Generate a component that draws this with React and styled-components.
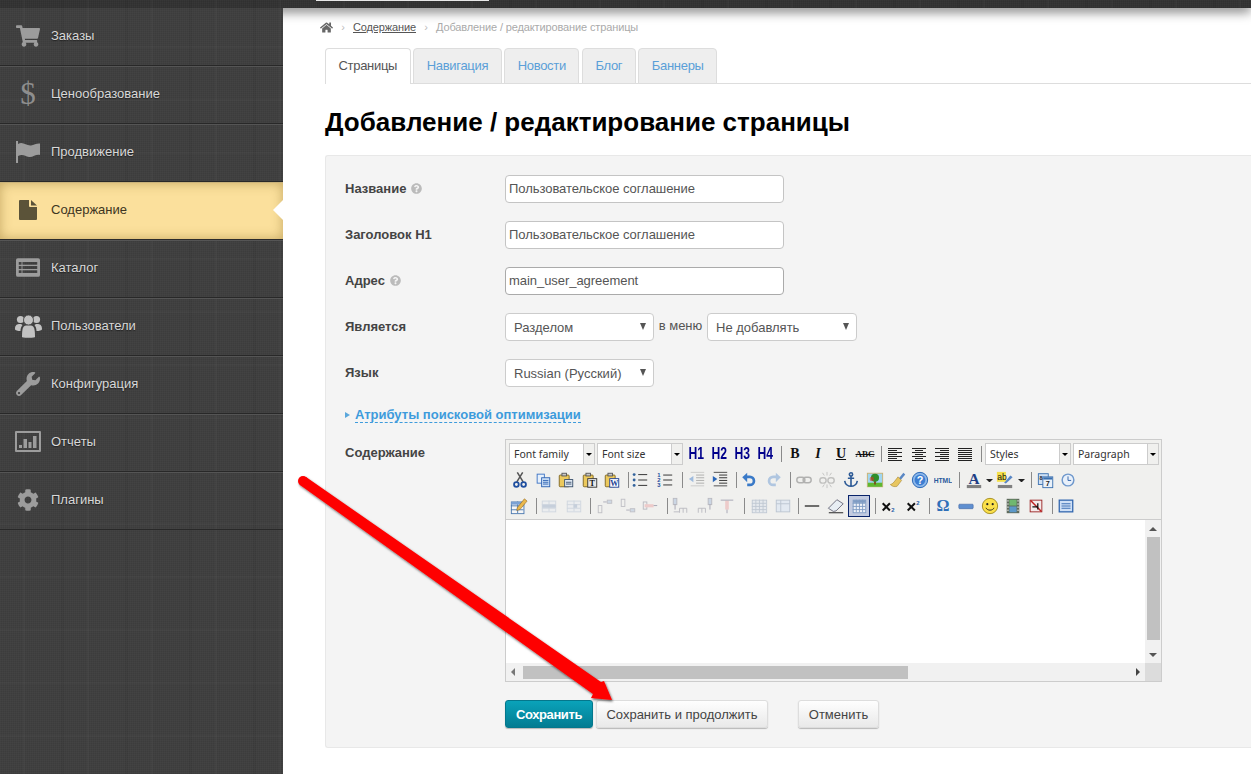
import React from "react";
import styled, { createGlobalStyle, css } from "styled-components";
import { FaShoppingCart, FaWrench, FaCog, FaHome, FaQuestionCircle } from "react-icons/fa";

const GlobalStyle = createGlobalStyle`
  html, body {
    margin: 0;
    height: 100%;
    overflow: hidden;
    background: #fff;
  }
  body {
    font-family: "Liberation Sans", Arial, sans-serif;
    font-size: 13px;
    color: #444;
  }
`;

const darkCloth = css`
  background-color: #404040;
  background-image:
    repeating-linear-gradient(90deg, rgba(255, 255, 255, 0.018) 0 1px, transparent 1px 2px),
    repeating-linear-gradient(0deg, rgba(0, 0, 0, 0.06) 0 1px, transparent 1px 2px),
    repeating-linear-gradient(90deg, transparent 0 23px, rgba(255, 255, 255, 0.02) 23px 25px, transparent 25px 61px, rgba(0, 0, 0, 0.04) 61px 64px),
    repeating-linear-gradient(0deg, transparent 0 37px, rgba(255, 255, 255, 0.015) 37px 39px, transparent 39px 53px);
`;

const Page = styled.div`
  position: relative;
  width: 1251px;
  height: 774px;
  display: flex;
  flex-direction: column;
  overflow: hidden;
`;

const TopBar = styled.div`
  ${darkCloth}
  height: 8px;
  flex: none;
  background-color: #333;
  box-shadow: 0 3px 12px rgba(0, 0, 0, 0.65);
  position: relative;
  z-index: 2;
`;

const TopSearch = styled.div`
  margin-left: 316px;
  width: 173px;
  height: 1px;
  background: #e8e8e8;
`;

const Body = styled.div`
  flex: 1;
  display: flex;
  min-height: 0;
`;

const Sidebar = styled.nav`
  ${darkCloth}
  width: 283px;
  flex: none;
  position: relative;
  z-index: 3;
`;

const NavItem = styled.a`
  position: relative;
  box-sizing: border-box;
  height: 58px;
  display: flex;
  align-items: center;
  padding-bottom: 3px;
  color: ${(p) => (p.$active ? "#3d3522" : "#d8d8d8")};
  text-shadow: ${(p) => (p.$active ? "none" : "0 1px 1px #222")};
  border-bottom: 1px solid ${(p) => (p.$active ? "#2b2b2b" : "#282828")};
  border-top: 1px solid ${(p) => (p.$active ? "#c9b27a" : p.$first ? "transparent" : "#555")};
  background: ${(p) => (p.$active ? "#fbe09c" : "transparent")};
  box-shadow: ${(p) => (p.$active ? "inset 0 0 12px rgba(130, 100, 30, 0.45)" : "none")};

  ${(p) =>
    p.$active &&
    css`
      &::after {
        content: "";
        position: absolute;
        right: 0;
        top: 17px;
        border: 10px solid transparent;
        border-left-width: 0;
        border-right-color: #fff;
      }
    `}
`;

const NavIcon = styled.span`
  box-sizing: border-box;
  width: 51px;
  padding-left: 5px;
  display: flex;
  justify-content: center;
  color: ${(p) => (p.$active ? "#5b5339" : "#9c9c9c")};
  text-shadow: none;
`;

const DollarGlyph = styled.span`
  font-family: "Liberation Serif", serif;
  font-size: 31px;
  line-height: 31px;
  color: #8e8e8e;
`;

const Main = styled.main`
  flex: 1;
  min-width: 0;
  padding-left: 42px;
`;

const Crumbs = styled.div`
  height: 40px;
  display: flex;
  align-items: center;
  margin-left: -5px;
  padding-bottom: 2px;
  box-sizing: border-box;
  font-size: 11px;
  letter-spacing: -0.13px;
  color: #aaa;
  svg {
    color: #666;
  }
`;

const CrumbLink = styled.a`
  color: #555;
  text-decoration: underline;
`;

const CrumbSep = styled.span`
  width: ${(p) => p.$w}px;
  text-align: center;
  color: #bbb;
`;

const Tabs = styled.div`
  display: flex;
  gap: 2.5px;
  height: 36px;
  box-sizing: border-box;
  border-bottom: 1px solid #ddd;
`;

const Tab = styled.a`
  box-sizing: border-box;
  height: 36px;
  padding: 9px 12.5px 0;
  letter-spacing: -0.3px;
  border: 1px solid #ddd;
  border-bottom: ${(p) => (p.$active ? "0" : "1px solid #ddd")};
  border-radius: 4px 4px 0 0;
  background: ${(p) => (p.$active ? "#fff" : "#eee")};
  color: ${(p) => (p.$active ? "#555" : "#5a9fd8")};
`;

const Title = styled.h1`
  margin: 0;
  height: 71px;
  line-height: 77px;
  font-size: 26px;
  font-weight: bold;
  color: #000;
  white-space: nowrap;
`;

const Panel = styled.form`
  box-sizing: border-box;
  height: 593px;
  padding: 19px 0 0 19px;
  background: #f4f4f4;
  border: 1px solid #e8e8e8;
  border-right: 0;
  border-radius: 3px 0 0 3px;
`;

const Row = styled.div`
  display: flex;
  align-items: ${(p) => (p.$top ? "flex-start" : "center")};
  min-height: 28px;
  margin-bottom: 18px;
`;

const Label = styled.label`
  width: 160px;
  flex: none;
  display: flex;
  align-items: center;
  gap: 5px;
  font-weight: bold;
  color: #444;
  padding: ${(p) => (p.$top ? "6px 0 0" : "0 0 2px")};
  svg {
    color: #bbb;
  }
`;

const TextInput = styled.input`
  box-sizing: border-box;
  width: 279px;
  height: 28px;
  padding: 0 3px 2px;
  font: 13px "Liberation Sans", Arial, sans-serif;
  letter-spacing: -0.05px;
  color: #555;
  background: #fff;
  border: 1px solid ${(p) => (p.$strong ? "#aaa" : "#c4c4c4")};
  border-radius: 4px;
  outline: none;
`;

const SelectBox = styled.div`
  box-sizing: border-box;
  width: ${(p) => p.$w}px;
  height: 28px;
  padding: 1px 8px 0;
  display: flex;
  align-items: center;
  justify-content: space-between;
  color: #555;
  background: #fff;
  border: 1px solid #ccc;
  border-radius: 4px;

  &::after {
    content: "";
    border: 3.5px solid transparent;
    border-top: 7px solid #555;
    border-bottom: 0;
    margin-right: -1px;
    margin-top: -2px;
  }
`;

const InMenu = styled.span`
  width: 53px;
  text-align: center;
  color: #555;
  margin-top: -3px;
`;

const SeoToggle = styled.div`
  display: flex;
  align-items: center;
  height: 19px;
  margin: 0 0 15px;
  &::before {
    content: "";
    border: 3.5px solid transparent;
    border-left: 5px solid #5aa7dc;
    border-right: 0;
    margin-right: 5px;
  }
`;

const SeoLink = styled.a`
  font-weight: bold;
  color: #3d9bdc;
  border-bottom: 1px dashed #3d9bdc;
  line-height: 15px;
`;

const Editor = styled.div`
  box-sizing: border-box;
  width: 657px;
  height: 243px;
  background: #f0f0ee;
  border: 1px solid #ccc;
  display: flex;
  flex-direction: column;
`;

const Toolbar = styled.div`
  height: 79px;
  flex: none;
  padding-top: 1px;
  box-sizing: border-box;
`;

const ToolRow = styled.div`
  height: 26px;
  display: flex;
  align-items: center;
`;

const Tool = styled.span`
  flex: none;
  box-sizing: border-box;
  width: ${(p) => p.$w}px;
  margin-left: ${(p) => p.$left}px;
  height: ${(p) => (p.$active ? "22px" : "20px")};
  display: flex;
  align-items: center;
  justify-content: center;
  ${(p) =>
    p.$active &&
    css`
      background: #c2cbe0;
      border: 1px solid #0a246a;
    `}
`;

const ToolSep = styled.span`
  flex: none;
  width: 1px;
  height: 16px;
  margin-left: ${(p) => p.$left}px;
  background: #8a8a8a;
`;

const Combo = styled.span`
  flex: none;
  box-sizing: border-box;
  width: 86px;
  height: 22px;
  margin-left: ${(p) => p.$left}px;
  display: flex;
  align-items: center;
  padding-left: 4px;
  background: #fff;
  border: 1px solid #ccc;
  font: 10.5px "Noto Sans", sans-serif;
  color: #333;
`;

const ComboArrow = styled.span`
  margin-left: auto;
  width: 10px;
  height: 20px;
  background: #f0f0ee;
  border-left: 1px solid #ccc;
  display: flex;
  align-items: center;
  justify-content: center;
  &::after {
    content: "";
    border: 3px solid transparent;
    border-top: 3px solid #000;
    border-bottom: 0;
  }
`;

const SplitArrow = styled.span`
  flex: none;
  box-sizing: border-box;
  width: 7px;
  margin-left: ${(p) => p.$left}px;
  border: 3.5px solid transparent;
  border-top: 3.5px solid #222;
  border-bottom: 0;
`;

const HeadingTool = styled.span`
  font: bold 16px "Liberation Sans", sans-serif;
  color: #00008b;
  transform: scaleX(0.76);
  white-space: nowrap;
`;

const LetterTool = styled.span`
  font: bold ${(p) => p.$size || 13}px "Liberation Serif", serif;
  font-style: ${(p) => (p.$italic ? "italic" : "normal")};
  text-decoration: ${(p) => p.$line || "none"};
  color: #111;
`;

const EditArea = styled.div`
  flex: 1;
  min-height: 0;
  display: flex;
  background: #fff;
  border-top: 1px solid #ccc;
`;

const EditBlank = styled.div`
  flex: 1;
`;

const VBar = styled.div`
  width: 16px;
  flex: none;
  background: #f1f1f1;
  display: flex;
  flex-direction: column;
  align-items: center;
`;

const VThumb = styled.div`
  width: 13px;
  height: 103px;
  margin-bottom: auto;
  background: #c1c1c1;
`;

const ScrollArrow = styled.span`
  border: 4px solid transparent;
  ${(p) => p.$dir === "up" && "border-bottom: 4px solid #555; border-top: 0;"}
  ${(p) => p.$dir === "down" && "border-top: 4px solid #555; border-bottom: 0; margin-bottom: 6px;"}
  ${(p) => p.$dir === "left" && "border-right: 4px solid #777; border-left: 0; margin-left: 5px;"}
  ${(p) => p.$dir === "right" && "border-left: 4px solid #444; border-right: 0; margin-right: 5px;"}
`;

const UpSlot = styled.div`
  height: 17px;
  display: flex;
  align-items: center;
`;

const HBar = styled.div`
  height: 18px;
  flex: none;
  background: #f1f1f1;
  display: flex;
  align-items: center;
`;

const HThumb = styled.div`
  width: 385px;
  height: 13px;
  margin: 0 auto 0 8px;
  background: #c1c1c1;
`;

const ScrollCorner = styled.div`
  width: 16px;
  height: 100%;
  background: #dcdcdc;
`;

const Actions = styled.div`
  display: flex;
  margin: 18px 0 0 160px;
`;

const Button = styled.button`
  box-sizing: border-box;
  width: ${(p) => p.$w}px;
  height: 28px;
  margin-left: ${(p) => p.$left || 0}px;
  padding: 0;
  font: 13px "Liberation Sans", Arial, sans-serif;
  letter-spacing: ${(p) => (p.$primary ? "-0.4px" : "0")};
  border-radius: 3px;
  color: ${(p) => (p.$primary ? "#fff" : "#444")};
  font-weight: ${(p) => (p.$primary ? "bold" : "normal")};
  background: ${(p) =>
    p.$primary ? "linear-gradient(#0aa3ba, #037c92)" : "linear-gradient(#fefefe, #e9e9e9)"};
  border: 1px solid ${(p) => (p.$primary ? "#04778c" : "#ddd")};
  box-shadow: 0 1px 1px rgba(0, 0, 0, 0.25);
`;

const ArrowLayer = styled.svg`
  position: absolute;
  left: 0;
  top: 0;
  z-index: 4;
  pointer-events: none;
`;

/* ----- drawn icons ----- */

const FlagIcon = () => (
  <svg width="26" height="22" viewBox="0 0 26 22" fill="currentColor">
    <rect x="1" y="0" width="2" height="22" />
    <path d="M3 3 C8 0 11 5 16 4.5 C19 4 22 2 25 2.5 V14 C21 13 18 16.5 14 16 C10 15.5 8 12.5 3 15 Z" />
  </svg>
);

const PageIcon = () => (
  <svg width="18" height="20" viewBox="0 0 18 20" fill="currentColor">
    <path d="M1 0 H10 V6 A1 1 0 0 0 11 7 H18 V19 A1 1 0 0 1 17 20 H1 A1 1 0 0 1 0 19 V1 A1 1 0 0 1 1 0 Z" />
    <path d="M12 0 L18 5.5 H12 Z" />
  </svg>
);

const CatalogIcon = () => (
  <svg width="24" height="19" viewBox="0 0 26 20" fill="currentColor">
    <path
      fillRule="evenodd"
      d="M2 0 H24 A2 2 0 0 1 26 2 V18 A2 2 0 0 1 24 20 H2 A2 2 0 0 1 0 18 V2 A2 2 0 0 1 2 0 Z M3 4 V7 H6 V4 Z M7 4 V7 H23 V4 Z M3 8.5 V11.5 H6 V8.5 Z M7 8.5 V11.5 H23 V8.5 Z M3 13 V16 H6 V13 Z M7 13 V16 H23 V13 Z"
    />
  </svg>
);

const PeopleIcon = () => (
  <svg width="27" height="24" viewBox="0 0 27 24" fill="#c2c2c2">
    <circle cx="5.5" cy="5.5" r="3.6" />
    <circle cx="21.5" cy="5.5" r="3.6" />
    <path d="M0 15 C0 11 2 10 5 10 C6 10 7 10.5 7.5 11 C6 13 5.5 15 5.5 17 C3 17 0 16.5 0 15 Z" />
    <path d="M27 15 C27 11 25 10 22 10 C21 10 20 10.5 19.5 11 C21 13 21.5 15 21.5 17 C24 17 27 16.5 27 15 Z" />
    <circle cx="13.5" cy="6" r="5" stroke="#3c3c3c" strokeWidth="0.8" />
    <path d="M7 23 C7 15 8 11.5 11 11.5 H16 C19 11.5 20 15 20 23 C20 24 7 24 7 23 Z" />
  </svg>
);

const ReportIcon = () => (
  <svg width="26" height="21" viewBox="0 0 26 21" fill="currentColor">
    <path
      fillRule="evenodd"
      d="M1 0 H25 A1 1 0 0 1 26 1 V20 A1 1 0 0 1 25 21 H1 A1 1 0 0 1 0 20 V1 A1 1 0 0 1 1 0 Z M2 2 V19 H24 V2 Z"
    />
    <rect x="4" y="14" width="3" height="3" />
    <rect x="8.5" y="8" width="3.5" height="9" />
    <rect x="13.5" y="11" width="3" height="6" />
    <rect x="18" y="5" width="3.5" height="12" />
  </svg>
);

const serif = "Liberation Serif, serif";
const sans = "Liberation Sans, sans-serif";

const lines = (x1, x2, ys, color = "#222") =>
  ys.map((y) => <line key={y} x1={x1} x2={x2} y1={y} y2={y} stroke={color} />);

const clipboard = (
  <>
    <rect x="2.5" y="4.5" width="11" height="13" rx="1" fill="#ecc95c" stroke="#7c6320" />
    <rect x="5.5" y="2.5" width="5" height="3" fill="#c9c9c9" stroke="#555" />
  </>
);

const grid = (x, y, w, h, stroke = "#9fb0c8", fill = "#e4eaf2", cols = 2, rows = 3) => (
  <>
    <rect x={x + 0.5} y={y + 0.5} width={w} height={h} fill={fill} stroke={stroke} />
    {Array.from({ length: rows - 1 }, (_, i) => (
      <line key={"r" + i} x1={x} x2={x + w} y1={y + 0.5 + (h * (i + 1)) / rows} y2={y + 0.5 + (h * (i + 1)) / rows} stroke={stroke} />
    ))}
    {Array.from({ length: cols - 1 }, (_, i) => (
      <line key={"c" + i} x1={x + 0.5 + (w * (i + 1)) / cols} x2={x + 0.5 + (w * (i + 1)) / cols} y1={y} y2={y + h} stroke={stroke} />
    ))}
  </>
);

const glyphs = {
  cut: (
    <>
      <path d="M6.5 12 L13 1.5 M13.5 12 L7 1.5" stroke="#555" strokeWidth="1.7" fill="none" />
      <circle cx="6" cy="15" r="2.6" fill="none" stroke="#1f4fa0" strokeWidth="2" />
      <circle cx="14" cy="15" r="2.6" fill="none" stroke="#1f4fa0" strokeWidth="2" />
    </>
  ),
  copy: (
    <>
      <rect x="3.5" y="3.5" width="8" height="10" fill="#e6f0fb" stroke="#3b72c4" />
      <rect x="8.5" y="7.5" width="9" height="10" fill="#cfe2f8" stroke="#2a5fb0" />
      {lines(10, 16, [10.5, 12.5, 14.5], "#2a5fb0")}
    </>
  ),
  paste: (
    <>
      {clipboard}
      <rect x="8.5" y="9.5" width="9" height="8" fill="#dfe8f2" stroke="#3a4f6a" />
      {lines(10, 16, [12.5, 14.5], "#3a4f6a")}
    </>
  ),
  pasteText: (
    <>
      {clipboard}
      <rect x="7.5" y="8.5" width="10" height="9.5" fill="#e8e8e8" stroke="#333" />
      <text x="12.5" y="16.5" fontSize="9" fontWeight="bold" textAnchor="middle" fontFamily={serif} fill="#111">T</text>
    </>
  ),
  pasteWord: (
    <>
      {clipboard}
      <rect x="7.5" y="8.5" width="10" height="9.5" fill="#fff" stroke="#1c3f94" />
      <text x="12.5" y="16.5" fontSize="9" fontWeight="bold" textAnchor="middle" fontFamily={serif} fill="#1c3f94">W</text>
    </>
  ),
  bullets: (
    <>
      {[4, 10, 16].map((y) => <circle key={y} cx="3.5" cy={y} r="1.6" fill="#33639c" />)}
      {lines(8, 18, [4, 10, 16])}
    </>
  ),
  numbers: (
    <>
      {[7, 12.5, 18].map((y, i) => (
        <text key={y} x="1.5" y={y} fontSize="6.5" fontWeight="bold" fontFamily={sans} fill="#1f4fa0">{i + 1}</text>
      ))}
      {lines(8, 18, [4.5, 10, 15.5])}
    </>
  ),
  outdent: (
    <g opacity="0.45">
      {lines(9, 18, [4.5, 7.5, 10.5, 13.5], "#555")}
      {lines(3, 18, [1.5, 16.5], "#999")}
      <path d="M1 9 L6 5.5 V12.5 Z" fill="#3b79c9" />
    </g>
  ),
  indent: (
    <>
      {lines(9, 18, [4.5, 7.5, 10.5, 13.5])}
      {lines(3, 18, [1.5, 16.5], "#444")}
      <path d="M7 9 L2 5.5 V12.5 Z" fill="#2a66b8" />
    </>
  ),
  undo: (
    <>
      <path d="M7 6.5 H11 A4.5 4.5 0 0 1 11 15.5 H8" fill="none" stroke="#3a7ac8" strokeWidth="3" />
      <path d="M2.5 7 L8 2 V12.5 Z" fill="#3a7ac8" />
    </>
  ),
  redo: (
    <g opacity="0.35">
      <path d="M13 6.5 H9 A4.5 4.5 0 0 0 9 15.5 H12" fill="none" stroke="#3a7ac8" strokeWidth="3" />
      <path d="M17.5 7 L12 2 V12.5 Z" fill="#3a7ac8" />
    </g>
  ),
  link: (
    <g opacity="0.4" fill="none" stroke="#555" strokeWidth="1.6">
      <rect x="2" y="7" width="9" height="6" rx="3" />
      <rect x="9" y="7" width="9" height="6" rx="3" />
    </g>
  ),
  unlink: (
    <g opacity="0.3" fill="none" stroke="#555" strokeWidth="1.6">
      <rect x="2" y="7.5" width="7" height="6" rx="3" />
      <rect x="11" y="7.5" width="7" height="6" rx="3" />
      <path d="M10 1 V5 M10 15 V19 M5 2 L7 5 M15 2 L13 5 M5 18 L7 15 M15 18 L13 15" strokeWidth="1" />
    </g>
  ),
  anchor: (
    <g fill="none" stroke="#2d5a96" strokeWidth="1.8">
      <circle cx="10" cy="3.8" r="1.8" />
      <path d="M10 5.5 V17 M6.5 8 H13.5 M3 11 C3.5 15 7 17 10 17 C13 17 16.5 15 17 11" />
    </g>
  ),
  image: (
    <>
      <rect x="1.5" y="2.5" width="17" height="15" fill="#9fd6f2" stroke="#c8b070" />
      <rect x="2" y="13" width="16" height="4.5" fill="#5fb82e" />
      <rect x="9" y="10" width="2" height="5" fill="#7a4a1c" />
      <circle cx="10" cy="7.5" r="4.5" fill="#2f8f2a" />
      <circle cx="6.5" cy="9" r="2.5" fill="#d03a2a" opacity="0.6" />
    </>
  ),
  cleanup: (
    <>
      <path d="M11 8 L16 2 L18 4 L13 10 Z" fill="#5a87c4" />
      <path d="M10 6.5 L14 10.5 L9 17 C6 18 3 17 1.5 15 C4.5 14.5 6.5 11 10 6.5 Z" fill="#e8c660" stroke="#a08030" strokeWidth="0.6" />
    </>
  ),
  help: (
    <>
      <circle cx="10" cy="10" r="8.5" fill="#8db8ea" stroke="#1f5fb0" />
      <circle cx="10" cy="10" r="6" fill="#3d7ed2" />
      <text x="10" y="14.5" fontSize="12" fontWeight="bold" textAnchor="middle" fontFamily={sans} fill="#fff">?</text>
    </>
  ),
  html: <text x="10" y="13" fontSize="7.5" fontWeight="bold" textAnchor="middle" fontFamily={sans} fill="#2a5a9c">HTML</text>,
  fore: (
    <>
      <text x="10" y="14" fontSize="17" fontWeight="bold" textAnchor="middle" fontFamily={serif} fill="#1f3f86">A</text>
      <rect x="2" y="15.5" width="16" height="3.5" fill="#808080" />
    </>
  ),
  back: (
    <>
      <rect x="1" y="1" width="10" height="11" fill="#f4e04a" />
      <text x="1.5" y="10" fontSize="9.5" fontFamily={sans} fill="#111">ab</text>
      <path d="M9 13 L16 5 L18.5 7 L11 14 Z" fill="#5a87c4" />
      <rect x="2" y="15.5" width="16" height="3.5" fill="#808080" />
    </>
  ),
  date: (
    <>
      <rect x="1.5" y="3" width="11" height="12" fill="#cfe0f4" stroke="#3a70b0" />
      <rect x="6.5" y="6.5" width="11" height="12" fill="#eaf1f9" stroke="#3a70b0" />
      <rect x="7" y="7" width="10" height="2.5" fill="#3a70b0" />
      <text x="12" y="17" fontSize="8" fontWeight="bold" textAnchor="middle" fontFamily={sans} fill="#222">7</text>
      <text x="4.5" y="10" fontSize="6" fontWeight="bold" textAnchor="middle" fontFamily={sans} fill="#222">8</text>
    </>
  ),
  time: (
    <>
      <circle cx="10" cy="10" r="6.5" fill="#e8f0fa" stroke="#6f98cc" strokeWidth="1.6" />
      <path d="M10 6 V10.5 H13.5" fill="none" stroke="#2a5fa8" />
    </>
  ),
  edit: (
    <>
      {grid(1, 5, 14, 13, "#4a78b0", "#f6f6f6")}
      <rect x="1.5" y="5.5" width="14" height="3" fill="#7ba2d4" />
      <path d="M8 12 L16 2 L19 4.5 L11 14 L7.5 15 Z" fill="#eab84c" stroke="#8a5f18" strokeWidth="0.6" />
    </>
  ),
  rowA: <g opacity="0.4">{grid(2, 4, 15, 12)}<rect x="2.5" y="8.5" width="15" height="3.5" fill="#8aa0c0" /></g>,
  rowB: <g opacity="0.4">{grid(2, 4, 15, 12)}<rect x="9.5" y="8" width="4" height="4" fill="#8aa0c0" /></g>,
  colA: (
    <g opacity="0.4" fill="none" stroke="#778">
      <rect x="2.5" y="9.5" width="4" height="8" />
      <path d="M8 5.5 H12" stroke="#446" />
      <rect x="12.5" y="3.5" width="5" height="3.5" fill="#9fb8d8" />
    </g>
  ),
  colB: (
    <g opacity="0.4" fill="none" stroke="#778">
      <rect x="2.5" y="2.5" width="4" height="8" />
      <path d="M8 14.5 H12" stroke="#446" />
      <rect x="12.5" y="13" width="5" height="3.5" fill="#9fb8d8" />
    </g>
  ),
  colC: (
    <g opacity="0.45" fill="none" stroke="#778">
      <rect x="2.5" y="5.5" width="4" height="8" />
      <rect x="4" y="8" width="10" height="3.5" fill="#eba0a0" stroke="none" />
      <path d="M14 9.5 H18" stroke="#446" />
    </g>
  ),
  splitA: (
    <g opacity="0.45" fill="none" stroke="#778">
      <rect x="2.5" y="1.5" width="4" height="7" fill="#9fb8d8" />
      <path d="M4.5 8 V14" stroke="#446" />
      <path d="M3 16.5 H9 M9.5 12.5 V17.5 M13.5 12.5 V17.5 M17.5 12.5 V17.5 M9.5 12.5 H17.5" />
    </g>
  ),
  splitB: (
    <g opacity="0.45" fill="none" stroke="#778">
      <rect x="13.5" y="1.5" width="4" height="7" fill="#9fb8d8" />
      <path d="M15.5 8 V14" stroke="#446" />
      <path d="M2.5 12.5 V17.5 M6.5 12.5 V17.5 M10.5 12.5 V17.5 M2.5 12.5 H10.5" />
    </g>
  ),
  splitC: (
    <g opacity="0.45" fill="none" stroke="#778">
      <rect x="8" y="4" width="4" height="10" fill="#eba0a0" stroke="none" />
      <path d="M3 3.5 H17 M10 14 V18" stroke="#446" />
    </g>
  ),
  merge: <g opacity="0.5">{grid(2, 3, 16, 14, "#8fa0b8", "#dce4ee", 4, 4)}</g>,
  unmerge: <g opacity="0.55"><rect x="2.5" y="3.5" width="15" height="13" fill="#d8e4f4" stroke="#8fa0b8" /><path d="M7.5 3.5 V16.5 M2.5 7.5 H17.5" stroke="#8fa0b8" /></g>,
  hr: <line x1="2" x2="18" y1="10" y2="10" stroke="#111" strokeWidth="1.3" />,
  eraser: (
    <>
      <path d="M7 16 L1.5 12.5 L11 3 L18 7.5 L10 15.5 Z" fill="#e8eef4" stroke="#667" />
      <path d="M2 17.5 H18" stroke="#111" />
    </>
  ),
  table: (
    <>
      {grid(3, 3, 14, 14, "#7f9cc4", "#eef2f8", 4, 4)}
      <rect x="3.5" y="3.5" width="14" height="3" fill="#7f9cc4" />
    </>
  ),
  sub: (
    <>
      <path d="M3 7 L11 15 M11 7 L3 15" stroke="#111" strokeWidth="2.2" />
      <text x="12.5" y="17" fontSize="6.5" fontWeight="bold" fontFamily={sans} fill="#2a5fa8">2</text>
    </>
  ),
  sup: (
    <>
      <path d="M3 7 L11 15 M11 7 L3 15" stroke="#111" strokeWidth="2.2" />
      <text x="12.5" y="9" fontSize="6.5" fontWeight="bold" fontFamily={sans} fill="#2a5fa8">2</text>
    </>
  ),
  omega: <text x="10" y="16" fontSize="18" fontWeight="bold" textAnchor="middle" fontFamily={serif} fill="#2f6fb8">Ω</text>,
  nbsp: <rect x="2" y="8" width="16" height="5" rx="1" fill="#5f8fd0" stroke="#3a5f9c" strokeWidth="0.6" />,
  smile: (
    <>
      <circle cx="10" cy="10" r="8.5" fill="#fbe04a" stroke="#a08a20" />
      <circle cx="7" cy="8" r="1.2" fill="#222" />
      <circle cx="13" cy="8" r="1.2" fill="#222" />
      <path d="M5.5 12 C7 15.5 13 15.5 14.5 12" fill="none" stroke="#222" />
    </>
  ),
  media: (
    <>
      <rect x="3" y="2" width="14" height="16" fill="#5f6b5c" />
      <rect x="6" y="3" width="8" height="6.5" fill="#6fb870" />
      <rect x="6" y="10.5" width="8" height="6.5" fill="#5c98c8" />
      {[3.5, 7, 10.5, 14].map((y) => <rect key={y} x="3.8" y={y} width="1.2" height="1.6" fill="#eee" />)}
      {[3.5, 7, 10.5, 14].map((y) => <rect key={y} x="15" y={y} width="1.2" height="1.6" fill="#eee" />)}
    </>
  ),
  nonbreak: (
    <>
      <rect x="3.5" y="3.5" width="13" height="13" fill="#f4eaea" stroke="#9a2020" />
      <path d="M4 4 L16 16" stroke="#c02020" strokeWidth="1.6" />
      <path d="M6 11 H12 M12 7 V14" stroke="#111" strokeWidth="1.4" />
    </>
  ),
  preview: (
    <>
      <rect x="2.5" y="3.5" width="15" height="13" fill="#cfe0f6" stroke="#2f64ae" strokeWidth="1.4" />
      {lines(5, 15, [7.5, 10, 12.5], "#2f64ae")}
    </>
  ),
};

const Glyph = ({ name }) => (
  <svg width="18" height="18" viewBox="0 0 20 20">
    {glyphs[name]}
  </svg>
);

const alignGlyph = (rows) => (
  <svg width="16" height="14" viewBox="0 0 16 14">
    {rows.map(([x1, x2], i) => (
      <line key={i} x1={x1} x2={x2} y1={i * 2 + 1.5} y2={i * 2 + 1.5} stroke="#222" />
    ))}
  </svg>
);

const toolParts = {
  h1: <HeadingTool>H1</HeadingTool>,
  h2: <HeadingTool>H2</HeadingTool>,
  h3: <HeadingTool>H3</HeadingTool>,
  h4: <HeadingTool>H4</HeadingTool>,
  bold: <LetterTool $size={14}>B</LetterTool>,
  italic: <LetterTool $size={14} $italic>I</LetterTool>,
  underline: <LetterTool $size={14} $line="underline">U</LetterTool>,
  strike: <LetterTool $size={9} $line="line-through">ABC</LetterTool>,
  left: alignGlyph([[1, 15], [1, 10], [1, 15], [1, 10], [1, 15], [1, 10], [1, 15]]),
  center: alignGlyph([[1, 15], [4, 12], [1, 15], [4, 12], [1, 15], [4, 12], [1, 15]]),
  right: alignGlyph([[1, 15], [6, 15], [1, 15], [6, 15], [1, 15], [6, 15], [1, 15]]),
  justify: alignGlyph([[1, 15], [1, 15], [1, 15], [1, 15], [1, 15], [1, 15], [1, 15]]),
};

/* [kind, centre x on the page] */
const toolbarRows = [
  [
    ["combo:Font family", 552], ["combo:Font size", 640],
    ["h1", 696], ["h2", 719], ["h3", 742], ["h4", 765], ["|", 781],
    ["bold", 795], ["italic", 818], ["underline", 841], ["strike", 865], ["|", 881],
    ["left", 895], ["center", 919], ["right", 942], ["justify", 965], ["|", 981],
    ["combo:Styles", 1028], ["combo:Paragraph", 1116],
  ],
  [
    ["cut", 520], ["copy", 543], ["paste", 566], ["pasteText", 590], ["pasteWord", 612], ["|", 628],
    ["bullets", 640], ["numbers", 665], ["|", 682],
    ["outdent", 697], ["indent", 720], ["|", 736],
    ["undo", 749], ["redo", 774], ["|", 790],
    ["link", 804], ["unlink", 827], ["anchor", 851], ["image", 875], ["cleanup", 898], ["help", 920], ["html", 943], ["|", 959],
    ["fore", 974], ["v", 989], ["back", 1005], ["v", 1021], ["|", 1031],
    ["date", 1046], ["time", 1068],
  ],
  [
    ["edit", 519], ["|", 536], ["rowA", 549], ["rowB", 574], ["|", 590],
    ["colA", 605], ["colB", 628], ["colC", 650], ["|", 667],
    ["splitA", 680], ["splitB", 705], ["splitC", 727], ["|", 744],
    ["merge", 759], ["unmerge", 783], ["|", 798],
    ["hr", 812], ["eraser", 836], ["table", 859], ["|", 875],
    ["sub", 889], ["sup", 914], ["|", 929],
    ["omega", 943], ["nbsp", 966], ["smile", 990], ["media", 1013], ["nonbreak", 1036], ["|", 1052],
    ["preview", 1066],
  ],
];

const ToolbarRow = ({ items }) => {
  let right = 506;
  return (
    <ToolRow>
      {items.map(([kind, centre], i) => {
        const isCombo = kind.startsWith("combo:");
        const width = isCombo ? 86 : kind === "|" ? 1 : kind === "v" ? 7 : kind === "table" ? 22 : 20;
        const left = centre - width / 2 - right;
        right = centre + width / 2;
        if (isCombo)
          return (
            <Combo key={i} $left={left}>
              {kind.slice(6)}
              <ComboArrow />
            </Combo>
          );
        if (kind === "|") return <ToolSep key={i} $left={left} />;
        if (kind === "v") return <SplitArrow key={i} $left={left} />;
        return (
          <Tool key={i} $w={width} $left={left} $active={kind === "table"}>
            {toolParts[kind] || <Glyph name={kind} />}
          </Tool>
        );
      })}
    </ToolRow>
  );
};

const navItems = [
  ["Заказы", <FaShoppingCart size={24} />],
  ["Ценообразование", <DollarGlyph>$</DollarGlyph>],
  ["Продвижение", <FlagIcon />],
  ["Содержание", <PageIcon />],
  ["Каталог", <CatalogIcon />],
  ["Пользователи", <PeopleIcon />],
  ["Конфигурация", <FaWrench size={24} />],
  ["Отчеты", <ReportIcon />],
  ["Плагины", <FaCog size={22} />],
];

const tabs = ["Страницы", "Навигация", "Новости", "Блог", "Баннеры"];

function App() {
  return (
    <Page>
      <GlobalStyle />
      <TopBar>
        <TopSearch />
      </TopBar>
      <Body>
        <Sidebar>
          {navItems.map(([label, icon], i) => (
            <NavItem key={label} $active={label === "Содержание"} $first={i === 0}>
              <NavIcon $active={label === "Содержание"}>{icon}</NavIcon>
              {label}
            </NavItem>
          ))}
        </Sidebar>
        <Main>
          <Crumbs>
            <FaHome size={13} />
            <CrumbSep $w={20}>›</CrumbSep>
            <CrumbLink>Содержание</CrumbLink>
            <CrumbSep $w={20}>›</CrumbSep>
            Добавление / редактирование страницы
          </Crumbs>
          <Tabs>
            {tabs.map((tab, i) => (
              <Tab key={tab} $active={i === 0}>{tab}</Tab>
            ))}
          </Tabs>
          <Title>Добавление / редактирование страницы</Title>
          <Panel onSubmit={(e) => e.preventDefault()}>
            <Row>
              <Label>Название <FaQuestionCircle size={11} /></Label>
              <TextInput defaultValue="Пользовательское соглашение" />
            </Row>
            <Row>
              <Label>Заголовок Н1</Label>
              <TextInput defaultValue="Пользовательское соглашение" />
            </Row>
            <Row>
              <Label>Адрес <FaQuestionCircle size={11} /></Label>
              <TextInput $strong defaultValue="main_user_agreement" />
            </Row>
            <Row>
              <Label>Является</Label>
              <SelectBox $w={149}>Разделом</SelectBox>
              <InMenu>в меню</InMenu>
              <SelectBox $w={150}>Не добавлять</SelectBox>
            </Row>
            <Row>
              <Label>Язык</Label>
              <SelectBox $w={149}>Russian (Русский)</SelectBox>
            </Row>
            <SeoToggle>
              <SeoLink>Атрибуты поисковой оптимизации</SeoLink>
            </SeoToggle>
            <Row $top>
              <Label $top>Содержание</Label>
              <Editor>
                <Toolbar>
                  {toolbarRows.map((items, i) => (
                    <ToolbarRow key={i} items={items} />
                  ))}
                </Toolbar>
                <EditArea>
                  <EditBlank />
                  <VBar>
                    <UpSlot><ScrollArrow $dir="up" /></UpSlot>
                    <VThumb />
                    <ScrollArrow $dir="down" />
                  </VBar>
                </EditArea>
                <HBar>
                  <ScrollArrow $dir="left" />
                  <HThumb />
                  <ScrollArrow $dir="right" />
                  <ScrollCorner />
                </HBar>
              </Editor>
            </Row>
            <Actions>
              <Button $primary $w={88}>Сохранить</Button>
              <Button $w={172} $left={3}>Сохранить и продолжить</Button>
              <Button $w={81} $left={30}>Отменить</Button>
            </Actions>
          </Panel>
        </Main>
      </Body>
      <ArrowLayer width="1251" height="774" viewBox="0 0 1251 774">
        <defs>
          <filter id="arrowShadow" x="-10%" y="-10%" width="120%" height="120%">
            <feDropShadow dx="1" dy="1.5" stdDeviation="1" floodColor="#000" floodOpacity="0.6" />
          </filter>
        </defs>
        <g filter="url(#arrowShadow)" fill="#fe0000">
          <circle cx="303" cy="481" r="5" />
          <polygon points="306,477 601,682 604,681 612,700 591,698 593,694 300,485" />
        </g>
      </ArrowLayer>
    </Page>
  );
}

export default App;
